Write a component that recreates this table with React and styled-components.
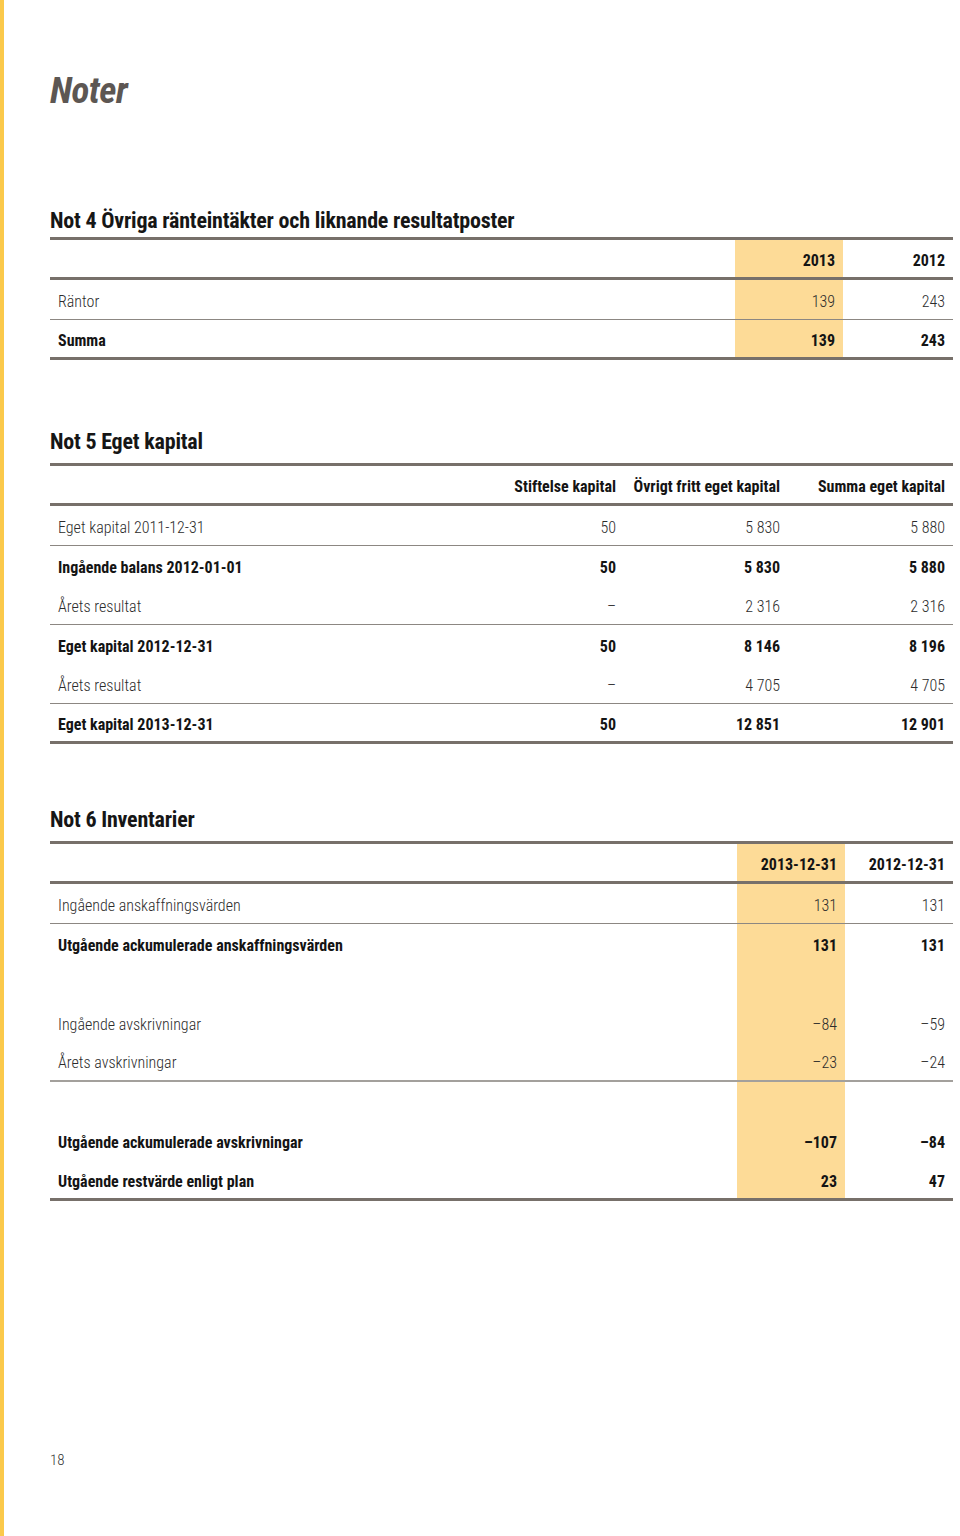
import React from 'react';
import styled, { createGlobalStyle } from 'styled-components';

const GlobalStyle = createGlobalStyle`
  html, body {
    margin: 0;
    padding: 0;
    background: #ffffff;
  }
  body {
    font-family: "Roboto Condensed", "Liberation Sans Narrow", "DejaVu Sans Condensed", Roboto, sans-serif;
    color: #1c1c1c;
  }
`;

const Page = styled.div`
  width: 960px;
  min-height: 1536px;
  box-sizing: border-box;
  border-left: 4px solid #fbc94b;
  padding: 69px 7px 0 46px;
  display: flex;
  flex-direction: column;
`;

const Title = styled.h1`
  margin: 0 0 93px;
  font-size: 37px;
  font-style: italic;
  font-weight: 700;
  color: #5d5753;
  letter-spacing: -0.5px;
`;

const Section = styled.section`
  margin-bottom: ${p => p.gap}px;
`;

const Heading = styled.h2`
  margin: 0 0 ${p => p.below}px;
  font-size: 22px;
  font-weight: 700;
  color: #161616;
  line-height: 32px;
  letter-spacing: -0.2px;
`;

const Table = styled.div`
  display: grid;
  grid-template-columns: ${p => p.cols};
  border-top: 3px solid #77706a;
  border-bottom: 3px solid #77706a;
`;

const Row = styled.div`
  display: contents;
`;

const lineStyles = {
  thick: '3px solid #77706a',
  thin: '1px solid #8c8782',
  mid: '2px solid #a3a09c',
};

const Cell = styled.div`
  box-sizing: border-box;
  height: ${p => (p.line === 'thick' ? 40 : p.last ? 37.5 : 39.5)}px;
  padding: 4px 8px 0;
  display: flex;
  align-items: center;
  justify-content: ${p => (p.num ? 'flex-end' : 'flex-start')};
  font-size: 16px;
  font-weight: ${p => (p.bold ? 700 : 300)};
  color: ${p => (p.bold ? '#141414' : '#2c2c2c')};
  background: ${p => (p.hl ? '#fddb97' : 'transparent')};
  border-bottom: ${p => lineStyles[p.line] || 'none'};
  white-space: nowrap;
`;

const PageNumber = styled.div`
  margin-top: auto;
  margin-bottom: 67px;
  font-size: 15px;
  font-weight: 300;
  color: #333;
`;

const note4 = [
  { label: '', cells: ['2013', '2012'], bold: true, line: 'thick' },
  { label: 'Räntor', cells: ['139', '243'], line: 'thin' },
  { label: 'Summa', cells: ['139', '243'], bold: true, last: true },
];

const note5 = [
  { label: '', cells: ['Stiftelse kapital', 'Övrigt fritt eget kapital', 'Summa eget kapital'], bold: true, line: 'thick' },
  { label: 'Eget kapital 2011-12-31', cells: ['50', '5 830', '5 880'], line: 'thin' },
  { label: 'Ingående balans 2012-01-01', cells: ['50', '5 830', '5 880'], bold: true },
  { label: 'Årets resultat', cells: ['–', '2 316', '2 316'], line: 'thin' },
  { label: 'Eget kapital 2012-12-31', cells: ['50', '8 146', '8 196'], bold: true },
  { label: 'Årets resultat', cells: ['–', '4 705', '4 705'], line: 'thin' },
  { label: 'Eget kapital 2013-12-31', cells: ['50', '12 851', '12 901'], bold: true, last: true },
];

const note6 = [
  { label: '', cells: ['2013-12-31', '2012-12-31'], bold: true, line: 'thick' },
  { label: 'Ingående anskaffningsvärden', cells: ['131', '131'], line: 'thin' },
  { label: 'Utgående ackumulerade anskaffningsvärden', cells: ['131', '131'], bold: true },
  { label: '', cells: ['', ''] },
  { label: 'Ingående avskrivningar', cells: ['–84', '–59'] },
  { label: 'Årets avskrivningar', cells: ['–23', '–24'], line: 'mid' },
  { label: '', cells: ['', ''] },
  { label: 'Utgående ackumulerade avskrivningar', cells: ['–107', '–84'], bold: true },
  { label: 'Utgående restvärde enligt plan', cells: ['23', '47'], bold: true, last: true },
];

function NoteTable({ rows, cols, highlight }) {
  return (
    <Table cols={cols}>
      {rows.map((r, i) => (
        <Row key={i}>
          <Cell bold={r.bold} line={r.line} last={r.last}>{r.label}</Cell>
          {r.cells.map((c, j) => (
            <Cell key={j} num bold={r.bold} line={r.line} last={r.last} hl={highlight === j}>
              {c}
            </Cell>
          ))}
        </Row>
      ))}
    </Table>
  );
}

export default function App() {
  return (
    <>
      <GlobalStyle />
      <Page>
        <Title>Noter</Title>

        <Section gap={66}>
          <Heading below={0}>Not 4 Övriga ränteintäkter och liknande resultatposter</Heading>
          <NoteTable rows={note4} cols="1fr 108px 110px" highlight={0} />
        </Section>

        <Section gap={60}>
          <Heading below={5}>Not 5 Eget kapital</Heading>
          <NoteTable rows={note5} cols="1fr 164px 164px 165px" />
        </Section>

        <Section gap={0}>
          <Heading below={5}>Not 6 Inventarier</Heading>
          <NoteTable rows={note6} cols="1fr 108px 108px" highlight={0} />
        </Section>

        <PageNumber>18</PageNumber>
      </Page>
    </>
  );
}
